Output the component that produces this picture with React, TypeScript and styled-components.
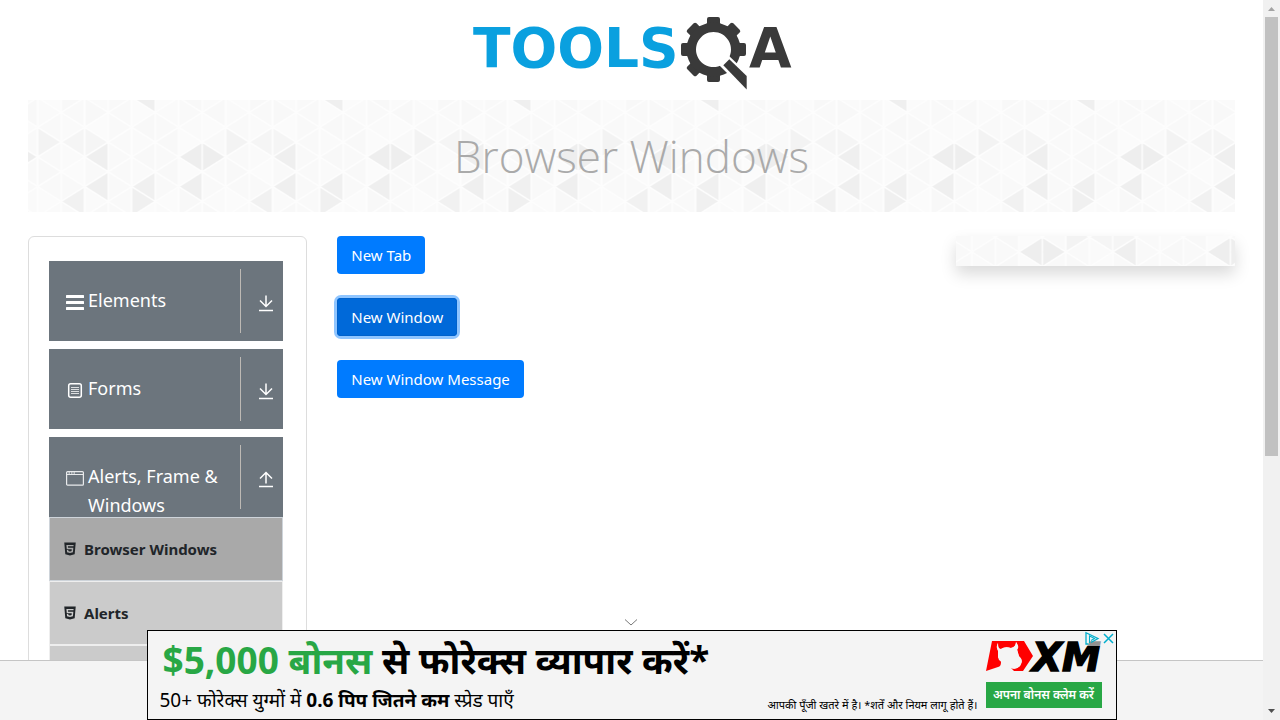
import React from "react";
import styled, { createGlobalStyle, css } from "styled-components";
import { AiFillHtml5 } from "react-icons/ai";

const GlobalStyle = createGlobalStyle`
  * { box-sizing: border-box; }
  body {
    margin: 0;
    background: #fff;
    color: #212529;
    font-family: "Noto Sans", "Open Sans", sans-serif;
    font-size: 16px;
    line-height: 24px;
  }
`;

const Shell = styled.div`
  display: grid;
  grid-template-columns: minmax(0, 1fr) 17px;
  height: 100vh;
`;

const Page = styled.div`
  overflow: hidden;
  padding: 0 28px;
`;

const Header = styled.header`
  display: flex;
  justify-content: center;
  height: 100px;
  padding-left: 3px;
`;

const HomeLink = styled.a`
  display: block;
`;

const Banner = styled.div`
  display: grid;
  height: 112px;
  > * { grid-area: 1 / 1; }
`;

const BannerTitle = styled.h1`
  z-index: 1;
  margin: 0;
  align-self: center;
  text-align: center;
  color: #aaa;
  font-family: "Open Sans", sans-serif;
  font-size: 44px;
  font-weight: 300;
  line-height: 58px;
`;

const Field = styled.svg`
  display: block;
  width: 100%;
  height: 100%;
`;

const Row = styled.div`
  display: flex;
  align-items: flex-start;
  margin: 24px -15px 0;
`;

const Column = styled.div<{ $share: number }>`
  flex: 0 0 ${(p) => p.$share}%;
  padding: 0 15px;
`;

const MenuCard = styled.nav`
  padding: 24px 23px 24px 20px;
  border: 1px solid #ddd;
  border-radius: 6px;
`;

const Group = styled.section`
  margin-bottom: 8px;
`;

const GroupHeader = styled.button`
  display: flex;
  width: 100%;
  height: 80px;
  padding: 8px 9px 0 17px;
  border: 0;
  background: #6c757d;
  color: #fff;
  font: inherit;
  font-size: 18px;
  line-height: 29px;
  text-align: left;
  cursor: pointer;
`;

const GroupIcon = styled.span`
  display: flex;
  flex: 0 0 22px;
  padding-top: 24px;
`;

const GroupLabel = styled.span`
  flex: 1;
  padding-top: 17px;
`;

const GroupToggle = styled.span`
  display: flex;
  justify-content: flex-end;
  flex: 0 0 34px;
  height: 64px;
  padding-top: 26px;
  border-left: 1px solid #bdb9b4;
`;

const SubList = styled.ul`
  margin: 0;
  padding: 0;
  list-style: none;
`;

const SubItem = styled.li<{ $active?: boolean }>`
  height: 64px;
  border: 1px solid #eee;
  background: #cbcbcb;
  ${(p) => p.$active && css`
    border-color: #ced4da;
    background: #a9a9a9;
  `}
`;

const SubLink = styled.a`
  display: flex;
  align-items: center;
  gap: 6px;
  height: 100%;
  padding-left: 12px;
  color: #212529;
  font-size: 15px;
  font-weight: 700;
  text-decoration: none;
`;

const Actions = styled.div`
  display: flex;
  flex-direction: column;
  align-items: flex-start;
  gap: 24px;
`;

const Button = styled.button<{ $focused?: boolean }>`
  height: 38px;
  padding: 0 14px;
  border: 0;
  border-radius: 4px;
  background: #007bff;
  color: #fff;
  font: inherit;
  font-size: 15px;
  cursor: pointer;
  ${(p) => p.$focused && css`
    background: #0069d9;
    box-shadow: inset 0 0 0 1px #0062cc, 0 0 0 3px #8fc5ff;
  `}
`;

const SidePanel = styled.aside`
  height: 30px;
  box-shadow: 0 8px 16px rgba(0, 0, 0, 0.15);
`;

const Track = styled.div`
  display: flex;
  flex-direction: column;
  background: #f1f1f1;
`;

const TrackEnd = styled.svg`
  flex: 0 0 17px;
  width: 17px;
`;

const TrackLane = styled.div`
  flex: 1;
  padding: 0 2px;
`;

const Thumb = styled.div`
  height: 64%;
  background: #c1c1c1;
`;

const AdStrip = styled.footer`
  position: fixed;
  right: 17px;
  bottom: 0;
  left: 0;
  z-index: 2;
  display: flex;
  justify-content: center;
  align-items: flex-end;
  height: 60px;
  border-top: 1px solid #c5c5c5;
  background: #f4f4f4;
`;

const AdStack = styled.div`
  width: 970px;
`;

const CollapseButton = styled.button`
  display: block;
  margin: 0 auto;
  padding: 0 2px 0 0;
  border: 0;
  background: none;
  line-height: 0;
`;

const AdBox = styled.div`
  position: relative;
  display: flex;
  height: 90px;
  padding: 0 14px 0 12px;
  border: 1px solid #000;
  background: #f4f4f4;
  color: #000;
  font-family: "Noto Sans", "Noto Sans Devanagari", sans-serif;
`;

const AdCopy = styled.div`
  flex: 1;
  white-space: nowrap;
`;

const AdHeadline = styled.div`
  padding: 3px 0 1px 3px;
  font-size: 37px;
  font-weight: 700;
  line-height: 52px;
`;

const Bonus = styled.span`
  color: #28a745;
`;

const AdDetail = styled.div`
  font-size: 19px;
  line-height: 26px;
`;

const AdTerms = styled.small`
  align-self: flex-end;
  padding: 0 8px 6px 0;
  font-size: 11px;
  line-height: 16px;
  white-space: nowrap;
`;

const AdBrand = styled.div`
  display: flex;
  flex-direction: column;
  flex: 0 0 116px;
  gap: 10px;
  padding-top: 9px;
`;

const BrandSvg = styled.svg`
  display: block;
  overflow: visible;
`;

const AdButton = styled.button`
  height: 26px;
  padding: 0;
  border: 0;
  background: #28a745;
  color: #fff;
  font: inherit;
  font-size: 12px;
  font-weight: 600;
  line-height: 24px;
  white-space: nowrap;
`;

const AdMarks = styled.div`
  position: absolute;
  top: 0;
  right: 0;
  display: flex;
  background: rgba(244, 244, 244, 0.6);
`;

const AdMark = styled.button`
  display: block;
  padding: 0;
  border: 0;
  background: none;
  line-height: 0;
`;

const STRIP = 23.5;
const HALF = 178 / 12;
const SHADES: Record<string, string> = {
  "2,0": "#efefef", "2,2": "#efefef", "4,2": "#f0f0f0", "4,3": "#f0f0f0",
  "1,3": "#f1f1f1", "6,0": "#eeeeee", "7,0": "#eeeeee", "6,2": "#efefef",
  "4,8": "#efefef", "0,11": "#f3f3f3", "1,11": "#f5f5f5", "2,11": "#f5f5f5",
};
const PALE = ["#f9f9f9", "#fbfbfb", "#f8f8f8", "#fafafa", "#f9f9f9"];

function Triangles({ id }: { id: string }) {
  const cells: React.ReactNode[] = [];
  for (let k = -8; k <= 9; k++) {
    for (let h = -1; h <= 13; h++) {
      const kk = (k + 16) % 8;
      const hh = (h + 12) % 12;
      const x = k * STRIP - 29.8;
      const y = h * HALF + 1;
      const pointsLeft = (k + h + 20) % 2 === 0;
      const apex = pointsLeft ? x : x + STRIP;
      const base = pointsLeft ? x + STRIP : x;
      const fill = SHADES[`${kk},${hh}`] || PALE[(kk * 3 + hh * 7 + kk * hh) % 5];
      cells.push(
        <path
          key={`${k}:${h}`}
          d={`M${apex} ${y}L${base} ${y - HALF}V${y + HALF}Z`}
          fill={fill}
          stroke="#fdfdfd"
          strokeWidth="1.4"
        />
      );
    }
  }
  return (
    <Field aria-hidden="true">
      <defs>
        <pattern id={id} x="50%" y="50%" width="188" height="178" patternUnits="userSpaceOnUse">
          {cells}
        </pattern>
      </defs>
      <rect width="100%" height="100%" fill={`url(#${id})`} />
    </Field>
  );
}

const teeth = [0, 45, 90, 180, 225, 270, 315];

function Logo() {
  return (
    <svg width="330" height="100" viewBox="468 0 330 100" role="img" aria-label="TOOLSQA">
      <text x="473" y="67" fill="#0aa0df" fontFamily="DejaVu Sans" fontWeight="700" fontSize="55">TOOLS</text>
      <g fill="#3a3a3a">
        {teeth.map((a) => (
          <path key={a} d="M704.500 27q2-1.500 2.500-4v-4q0-2 2-2h9q2 0 2 2v4q.5 2.500 2.500 4z" transform={`rotate(${a} 713.500 49.500)`} />
        ))}
        <path fillRule="evenodd" d="M713.500 22.500a27 27 0 1 0 .01 0zM713.500 32a17.500 17.500 0 1 1-.01 0z" />
        <path d="M727 54l22 21v20L719 65z" fill="#fff" />
        <path d="M729.300 59.300L746.700 76V89.500L723.300 65.300z" />
        <text x="749" y="67" fontFamily="DejaVu Sans" fontWeight="700" fontSize="55">A</text>
      </g>
    </svg>
  );
}

function BarsIcon() {
  return (
    <svg width="18" height="18" viewBox="0 0 18 18" fill="#fff">
      <rect y="2" width="18" height="3" rx=".5" />
      <rect y="8" width="18" height="3" rx=".5" />
      <rect y="14" width="18" height="3" rx=".5" />
    </svg>
  );
}

function FormIcon() {
  return (
    <svg width="18" height="18" viewBox="0 0 18 18" fill="none" stroke="#fff">
      <rect x="2.700" y="2.700" width="12.600" height="13.600" rx="2" strokeWidth="1.500" />
      <path d="M5 6.500h8M5 8.500h8M5 10.500h8M5 12.500h8" strokeWidth=".9" opacity=".85" />
    </svg>
  );
}

function WindowIcon() {
  return (
    <svg width="18" height="18" viewBox="0 0 18 18" fill="none" stroke="#e8eaec">
      <rect x=".6" y="2.600" width="16.800" height="13.600" rx="1" strokeWidth="1.200" />
      <path d="M1 5.500h16" />
      <path d="M2.500 4h1.500M5 4h1.500M7.500 4h1.500" stroke="#fff" />
    </svg>
  );
}

function ArrowIcon({ up }: { up?: boolean }) {
  return (
    <svg width="16" height="17" viewBox="0 0 16 17" fill="none" stroke="#fff" strokeWidth="1.500">
      <path d={up ? "M8 12.500V2M2 7.500L8 1.500l6 6" : "M8 .5V11.500M2 5.500l6 6 6-6"} />
      <path d="M1 15.500h14" />
    </svg>
  );
}

function BrandMark() {
  return (
    <BrandSvg width="116" height="32" viewBox="0 -1 116 32" role="img" aria-label="XM">
      <path d="M6 0H38L47 15 37 30H28Q25 30 25 27 30 29 34 25 38 19 33 15L31 8Q32 4 30 1 30 6 25 7 19 5 15 8 12 8 12 2 9 7 13 11 14 13 12 16L13 19Q16 20 15 25L0 30Z" fill="#f00" />
      <path d="M12 2Q10 8 15 8 19 5 25 7 30 6 30 1 34 6 31 9L33 16Q38 19 34 25 30 29 25 27L28 30H7Q16 27 15 20L12 16Z" fill="#f4f4f4" />
      <text x="46" y="30" fontFamily="DejaVu Sans" fontWeight="700" fontStyle="italic" fontSize="39" stroke="#000" strokeWidth="1.500">XM</text>
    </BrandSvg>
  );
}

const groups = [
  { label: "Elements", icon: <BarsIcon /> },
  { label: "Forms", icon: <FormIcon /> },
  { label: "Alerts, Frame & Windows", icon: <WindowIcon />, items: ["Browser Windows", "Alerts", "Frames"] },
];

export default function App() {
  return (
    <>
      <GlobalStyle />
      <Shell>
        <Page>
          <Header>
            <HomeLink href="#"><Logo /></HomeLink>
          </Header>
          <Banner>
            <Triangles id="banner-field" />
            <BannerTitle>Browser Windows</BannerTitle>
          </Banner>
          <Row>
            <Column $share={25}>
              <MenuCard>
                {groups.map((g) => (
                  <Group key={g.label}>
                    <GroupHeader>
                      <GroupIcon>{g.icon}</GroupIcon>
                      <GroupLabel>{g.label}</GroupLabel>
                      <GroupToggle><ArrowIcon up={!!g.items} /></GroupToggle>
                    </GroupHeader>
                    {g.items && (
                      <SubList>
                        {g.items.map((item, i) => (
                          <SubItem key={item} $active={i === 0}>
                            <SubLink href="#"><AiFillHtml5 size={16} />{item}</SubLink>
                          </SubItem>
                        ))}
                      </SubList>
                    )}
                  </Group>
                ))}
              </MenuCard>
            </Column>
            <Column $share={50}>
              <Actions>
                <Button>New Tab</Button>
                <Button $focused>New Window</Button>
                <Button>New Window Message</Button>
              </Actions>
            </Column>
            <Column $share={25}>
              <SidePanel><Triangles id="side-field" /></SidePanel>
            </Column>
          </Row>
        </Page>
        <Track aria-hidden="true">
          <TrackEnd height="17" viewBox="0 0 17 17"><path d="M5 11h7L8.500 7z" fill="#a3a3a3" /></TrackEnd>
          <TrackLane><Thumb /></TrackLane>
          <TrackEnd height="17" viewBox="0 0 17 17"><path d="M5 6h7L8.500 10z" fill="#505050" /></TrackEnd>
        </Track>
      </Shell>
      <AdStrip>
        <AdStack>
          <CollapseButton aria-label="Hide advertisement">
            <svg width="14" height="12" viewBox="0 0 14 12" fill="none" stroke="#777"><path d="M1 1.500l6 5.500L13 1.500" /></svg>
          </CollapseButton>
          <AdBox>
            <AdCopy>
              <AdHeadline><Bonus>$5,000 बोनस</Bonus> से फोरेक्स व्यापार करें*</AdHeadline>
              <AdDetail>50+ फोरेक्स युग्मों में <b>0.6 पिप जितने कम</b> स्प्रेड पाएँ</AdDetail>
            </AdCopy>
            <AdTerms>आपकी पूँजी खतरे में है। *शर्तें और नियम लागू होते हैं।</AdTerms>
            <AdBrand>
              <BrandMark />
              <AdButton>अपना बोनस क्लेम करें</AdButton>
            </AdBrand>
            <AdMarks>
              <AdMark aria-label="Ad choices">
                <svg width="17" height="15" viewBox="0 0 17 15" fill="none" stroke="#00aecd" strokeWidth="1.300"><path d="M4.500 13H2V1.700L14 7.500 7 11.500" /><path d="M5.500 12V5l5 2.500-3.500 2" strokeWidth="1.100" /></svg>
              </AdMark>
              <AdMark aria-label="Close ad">
                <svg width="15" height="15" viewBox="0 0 15 15" stroke="#00aecd" strokeWidth="1.500"><path d="M3 3l9 9M12 3l-9 9" /></svg>
              </AdMark>
            </AdMarks>
          </AdBox>
        </AdStack>
      </AdStrip>
    </>
  );
}
